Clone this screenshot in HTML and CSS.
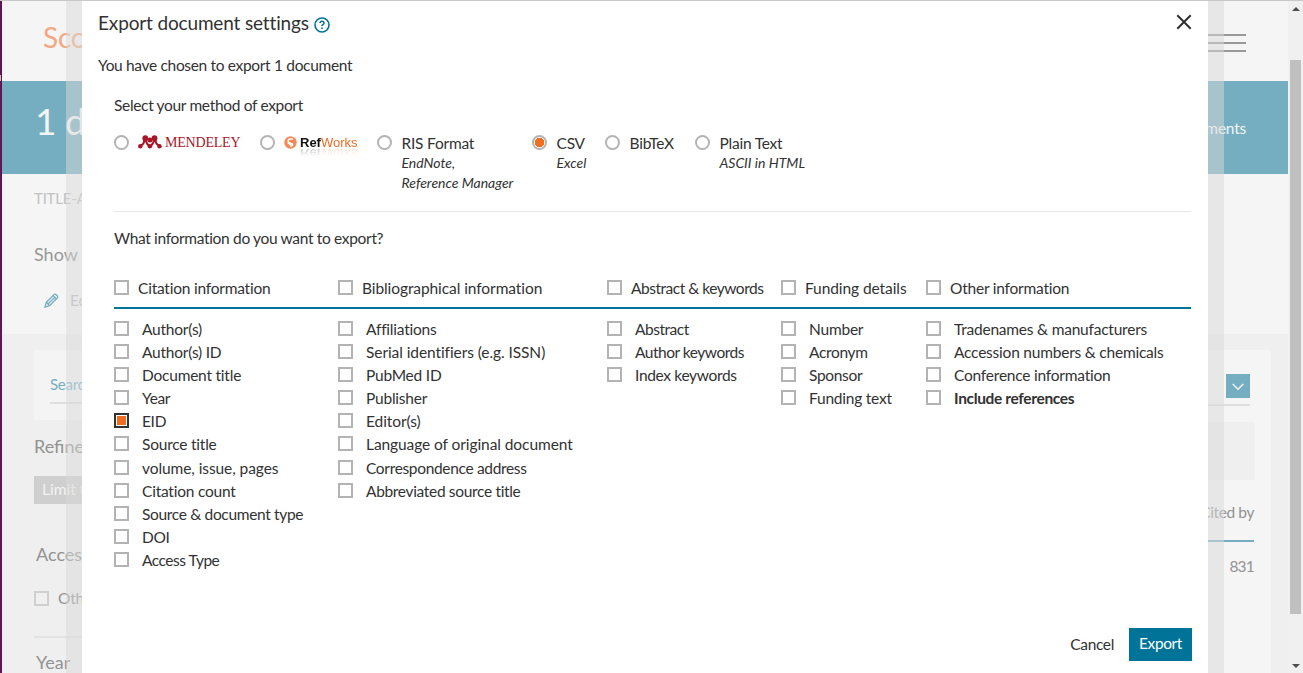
FILE: index.html
```html
<!DOCTYPE html>
<html lang="en">
<head>
<meta charset="utf-8">
<title>Export document settings</title>
<link rel="stylesheet" href="styles.css">
</head>
<body>
<div class="screen">
  <div class="window-edge"><i class="edge-notch"></i></div>
  <main class="page">
    <header class="topbar">
      <span class="brand">Scopus</span>
      <span class="menu"><i></i><i></i><i></i></span>
    </header>
    <section class="banner">
      <h1 class="banner-title">1 document result</h1>
      <span class="banner-link">View secondary documents</span>
    </section>
    <section class="query">
      <p class="query-text">TITLE-ABS-KEY</p>
      <p class="query-show">Show</p>
      <p class="query-edit">
        <svg class="pencil" width="15" height="15" viewBox="0 0 15 15" fill="none" stroke="#75aec0" stroke-width="1.3"><path d="M1 14l1.4-4.8L10 1.6q1-.9 2.2.2l1 1q1 1.100 0 2.200L5.600 12.600z"/><path d="M2.400 9.200l3.200 3.400M4 11l7.300-7.300M9 2.600l3.400 3.400"/></svg>
        <span>Edit</span>
      </p>
    </section>
    <section class="results">
      <aside class="filters">
        <div class="search-box"><span class="search-text">Search within</span></div>
        <p class="filter-title refine">Refine results</p>
        <span class="limit">Limit to</span>
        <p class="filter-title access">Access type</p>
        <p class="filter-row"><i class="box faded"></i><span>Other</span></p>
        <p class="filter-title year">Year</p>
      </aside>
      <div class="list">
        <div class="list-tools">
          <span class="dropdown"><svg width="12" height="8" viewBox="0 0 12 8" fill="none" stroke="#eef2f3" stroke-width="1.5"><path d="M.7 1L6 6.300 11.300 1"/></svg></span>
        </div>
        <div class="list-band"></div>
        <div class="list-head">Cited by</div>
        <div class="list-count">831</div>
      </div>
    </section>
  </main>
  <div class="scrollbar">
    <i class="arrow up"></i>
    <i class="thumb"></i>
    <i class="arrow down"></i>
  </div>

  <div class="frame">
    <div class="modal">
      <div class="modal-head">
        <h2 class="modal-title">Export document settings</h2>
        <svg class="help" width="16" height="16" viewBox="0 0 16 16" fill="none" stroke="#007398"><circle cx="8" cy="8" r="7" stroke-width="1.600"/><path d="M6 6q.1-1.800 2-1.800t2 1.700q0 1-1.100 1.700T8 9.200" stroke-width="1.500"/><path d="M8 10.500v1.500" stroke-width="1.600"/></svg>
        <svg class="close" width="16" height="16" viewBox="0 0 16 16" fill="none" stroke="#2e2e2e" stroke-width="2"><path d="M1.300 1.300l13.400 13.400M14.700 1.300L1.300 14.700"/></svg>
      </div>
      <p class="chosen snug">You have chosen to export 1 document</p>
      <p class="method-title snug">Select your method of export</p>
      <div class="methods">
        <label class="method m-mendeley"><i class="radio"></i>
          <svg class="mendeley-mark" width="24" height="14" viewBox="0 0 24 14" fill="#a81628"><circle cx="7.300" cy="3.200" r="2.900"/><circle cx="16.500" cy="3.200" r="2.900"/><circle cx="11.900" cy="5" r="2.500"/><circle cx="2.300" cy="11.300" r="2.200"/><circle cx="11.900" cy="11.300" r="2.200"/><circle cx="21.500" cy="11.300" r="2.200"/><path d="M2.600 10.500Q6.500 9.500 6.200 4M21.200 10.500Q17.300 9.500 17.600 4M7.500 3.500Q8 8.500 10.800 10.800M16.300 3.500Q15.800 8.500 13 10.800" fill="none" stroke="#a81628" stroke-width="2"/></svg>
          <span class="mendeley-name">MENDELEY</span></label>
        <label class="method m-refworks"><i class="radio"></i>
          <svg class="refworks-mark" width="13" height="13" viewBox="0 0 13 13"><circle cx="6.500" cy="6.500" r="6.200" fill="#f58a58"/><path d="M9 3.200Q5.500 2 4.300 4.200T8.500 8Q9 9.500 6.500 10.300M3.600 6.500l3.600 3" stroke="#fff" stroke-width="1.400" fill="none"/></svg>
          <span class="refworks-name"><b>Ref</b>Works</span></label>
        <label class="method m-ris"><i class="radio"></i><span class="method-text">RIS Format<em>EndNote,<br>Reference Manager</em></span></label>
        <label class="method m-csv"><i class="radio on"></i><span class="method-text">CSV<em>Excel</em></span></label>
        <label class="method m-bib"><i class="radio"></i><span class="method-text">BibTeX</span></label>
        <label class="method m-plain"><i class="radio"></i><span class="method-text">Plain Text<em>ASCII in HTML</em></span></label>
      </div>
      <p class="info-title snug">What information do you want to export?</p>
      <div class="groups heads">
        <label class="group-head"><i class="box"></i>Citation information</label>
        <label class="group-head airy"><i class="box"></i>Bibliographical information</label>
        <label class="group-head tight"><i class="box"></i>Abstract &amp; keywords</label>
        <label class="group-head airy"><i class="box"></i>Funding details</label>
        <label class="group-head"><i class="box"></i>Other information</label>
      </div>
      <div class="groups">
        <div class="group">
          <label class="item"><i class="box"></i>Author(s)</label>
          <label class="item"><i class="box"></i>Author(s) ID</label>
          <label class="item"><i class="box"></i>Document title</label>
          <label class="item snug"><i class="box"></i>Year</label>
          <label class="item snug"><i class="box checked"></i>EID</label>
          <label class="item"><i class="box"></i>Source title</label>
          <label class="item airy"><i class="box"></i>volume, issue, pages</label>
          <label class="item"><i class="box"></i>Citation count</label>
          <label class="item snug"><i class="box"></i>Source &amp; document type</label>
          <label class="item snug"><i class="box"></i>DOI</label>
          <label class="item tight"><i class="box"></i>Access Type</label>
        </div>
        <div class="group">
          <label class="item"><i class="box"></i>Affiliations</label>
          <label class="item airy"><i class="box"></i>Serial identifiers (e.g. ISSN)</label>
          <label class="item"><i class="box"></i>PubMed ID</label>
          <label class="item"><i class="box"></i>Publisher</label>
          <label class="item airy"><i class="box"></i>Editor(s)</label>
          <label class="item airy"><i class="box"></i>Language of original document</label>
          <label class="item snug"><i class="box"></i>Correspondence address</label>
          <label class="item snug"><i class="box"></i>Abbreviated source title</label>
        </div>
        <div class="group">
          <label class="item tight"><i class="box"></i>Abstract</label>
          <label class="item tight"><i class="box"></i>Author keywords</label>
          <label class="item snug"><i class="box"></i>Index keywords</label>
        </div>
        <div class="group">
          <label class="item"><i class="box"></i>Number</label>
          <label class="item snug"><i class="box"></i>Acronym</label>
          <label class="item snug"><i class="box"></i>Sponsor</label>
          <label class="item"><i class="box"></i>Funding text</label>
        </div>
        <div class="group">
          <label class="item"><i class="box"></i>Tradenames &amp; manufacturers</label>
          <label class="item"><i class="box"></i>Accession numbers &amp; chemicals</label>
          <label class="item"><i class="box"></i>Conference information</label>
          <label class="item strong"><i class="box"></i>Include references</label>
        </div>
      </div>
      <div class="actions">
        <span class="cancel">Cancel</span>
        <span class="export">Export</span>
      </div>
    </div>
  </div>
</div>
</body>
</html>
```

FILE: styles.css
```css
* { box-sizing: border-box; margin: 0; padding: 0; }
body {
  width: 1303px; height: 673px; overflow: hidden;
  font: 15.500px/20px Lato, "Noto Sans", sans-serif; letter-spacing: -.22px;
  color: #323232; background: #f4f4f4;
}
i { font-style: normal; display: block; flex: none; }
svg { display: block; flex: none; }
.airy { letter-spacing: -.08px; }
.snug { letter-spacing: -.33px; }
.tight { letter-spacing: -.48px; }
.screen {
  position: relative; display: grid; grid-template-columns: 2px 1fr 15px;
  width: 1303px; height: 673px; overflow: hidden;
}
.screen::before { content: ""; position: absolute; inset: 0 0 auto 0; height: 1px; background: #c8c8c8; z-index: 3; }
.window-edge { background: #611653; padding-top: 75px; }
.edge-notch { width: 1px; height: 6px; background: #c9c3c7; }
.page { overflow: hidden; min-width: 0; height: 673px; }

/* results page under the dialog */
.topbar { height: 81px; background: #f5f5f5; display: flex; justify-content: space-between; padding: 20px 42px 0 41px; }
.brand { font-size: 28px; line-height: 34px; color: #f3a881; }
.menu { display: flex; flex-direction: column; gap: 6px; padding-top: 14px; }
.menu i { width: 60px; height: 2px; background: #999; }
.banner { height: 93px; background: #75aec0; color: #f2f5f6; display: flex; justify-content: space-between; padding: 18px 42px 0 33px; }
.banner-title { font-size: 37px; line-height: 44px; font-weight: 400; letter-spacing: -.5px; }
.banner-link { padding-top: 19px; }
.query { height: 160px; background: #f5f5f5; padding: 14px 0 0 32px; }
.query-text { color: #c1c1c1; font-size: 15px; }
.query-show { color: #979797; font-size: 18px; line-height: 24px; margin-top: 34px; letter-spacing: 0; }
.query-edit { display: flex; gap: 11px; color: #bababa; align-items: center; margin-top: 24px; padding-left: 10px; }
.results { height: 339px; background: #efefef; display: flex; justify-content: space-between; padding: 16px 17px 0 32px; }
.filters { width: 300px; color: #929292; }
.search-box { height: 70px; background: #f4f4f4; padding: 24px 16px 0; }
.search-text { display: block; height: 30px; border-bottom: 2px solid #dedede; color: #75aec0; line-height: 20px; font-size: 15px; }
.filter-title { font-size: 18px; line-height: 24px; letter-spacing: 0; }
.refine { margin-top: 14px; }
.limit { display: block; width: 90px; height: 28px; margin-top: 18px; background: #cfcfcf; color: #f3f3f3; padding: 0 8px; line-height: 26px; letter-spacing: 0; }
.access { margin: 38px 0 0 2px; }
.filter-row { display: flex; gap: 9px; align-items: center; margin-top: 22px; height: 20px; }
.year { margin-top: 28px; padding: 12px 0 0 2px; border-top: 2px solid #e3e3e3; }
.list { width: 240px; background: #f5f5f5; padding: 24px 17px 0 0; color: #929292; }
.list-tools { height: 32px; display: flex; justify-content: flex-end; border-bottom: 2px solid #dfdfdf; margin-right: 4px; }
.dropdown { width: 24px; height: 24px; background: #75aec0; display: grid; place-items: center; padding-top: 1px; }
.list-band { height: 58px; margin: 16px -1px 0 0; background: #efefef; }
.list-head { height: 62px; border-bottom: 2px solid #75aec0; text-align: right; padding-top: 22px; letter-spacing: -.4px; }
.list-count { text-align: right; padding-top: 14px; letter-spacing: -.8px; }

.scrollbar { background: #f0f0f0; display: flex; flex-direction: column; align-items: center; padding: 7px 0 5px; }
.arrow { border: 4px solid transparent; width: 8px; height: 4px; }
.up { border-bottom-color: #4d4d4d; border-top: 0; margin-bottom: 49px; }
.down { border-top-color: #4d4d4d; border-bottom: 0; margin-top: auto; }
.thumb { width: 11px; height: 554px; background: #c0c0c0; }

/* export dialog */
.frame {
  position: absolute; left: 66px; top: 1px; width: 1158px; height: 672px;
  padding: 0 16px; background: rgba(218, 218, 218, .5);
}
.modal { height: 672px; background: #fff; padding: 10px 17px 12px 32px; display: flex; flex-direction: column; }
.modal-head { display: flex; align-items: center; height: 24px; margin-left: -16px; }
.modal-title { font-size: 19px; line-height: 24px; font-weight: 400; letter-spacing: -.15px; }
.help { margin: 3px 0 0 5px; }
.close { margin: -3px -1px 0 auto; }
.chosen { margin: 20px 0 0 -16px; }
.method-title { margin-top: 20px; }
.methods { display: flex; height: 88px; margin-top: 9px; padding-top: 11px; border-bottom: 1px solid #e8e8e8; }
.method { display: flex; height: 60px; }
.radio { width: 15px; height: 15px; border: 2px solid #b3b3b3; border-radius: 50%; }
.radio.on { background: radial-gradient(circle, #f36d21 4.500px, #fff 5px); }
.method-text { margin: -2px 0 0 9.500px; white-space: nowrap; }
.method em { display: block; font-size: 14px; line-height: 20px; letter-spacing: 0; }
.m-mendeley { width: 146px; }
.m-refworks { width: 117px; }
.m-ris { width: 155px; }
.m-csv { width: 73px; }
.m-bib { width: 90px; }
.mendeley-mark { margin-left: 9px; }
.mendeley-name { font: 14px/16px "Liberation Serif", serif; color: #a81628; margin-left: 3px; letter-spacing: -.2px; }
.refworks-mark { margin: 1px 0 0 9px; }
.refworks-name { font: 13px/16px "Liberation Sans", sans-serif; color: #f36d21; margin-left: 3px; letter-spacing: 0; height: 16px; -webkit-box-reflect: below -6px linear-gradient(transparent 30%, rgba(0, 0, 0, .35)); }
.refworks-name b { color: #111; }
.info-title { margin-top: 16px; }
.groups { display: grid; grid-template-columns: 224px 269px 174px 145px 1fr; }
.heads { height: 31px; margin-top: 30px; border-bottom: 2px solid #007398; margin-bottom: 9.550px; }
.group-head { display: flex; gap: 9px; white-space: nowrap; height: 20px; }
.box { width: 15px; height: 15px; border: 2px solid #b3b3b3; }
.box.checked { border-color: #323232; background: #f36d21; box-shadow: inset 0 0 0 1px #fff; }
.box.faded { border-color: #cfcfcf; }
.item { display: flex; gap: 13px; height: 23.200px; white-space: nowrap; }
.item .box, .group-head .box { margin-top: 2px; }
.strong { font-weight: 700; letter-spacing: -.35px; }
.actions { margin-top: auto; display: flex; justify-content: flex-end; align-items: center; gap: 15px; margin-right: -1px; }
.cancel { letter-spacing: -.35px; padding-bottom: 2px; }
.export { width: 63px; height: 33px; background: #007398; color: #fff; text-align: center; line-height: 31px; letter-spacing: -.4px; }
```
